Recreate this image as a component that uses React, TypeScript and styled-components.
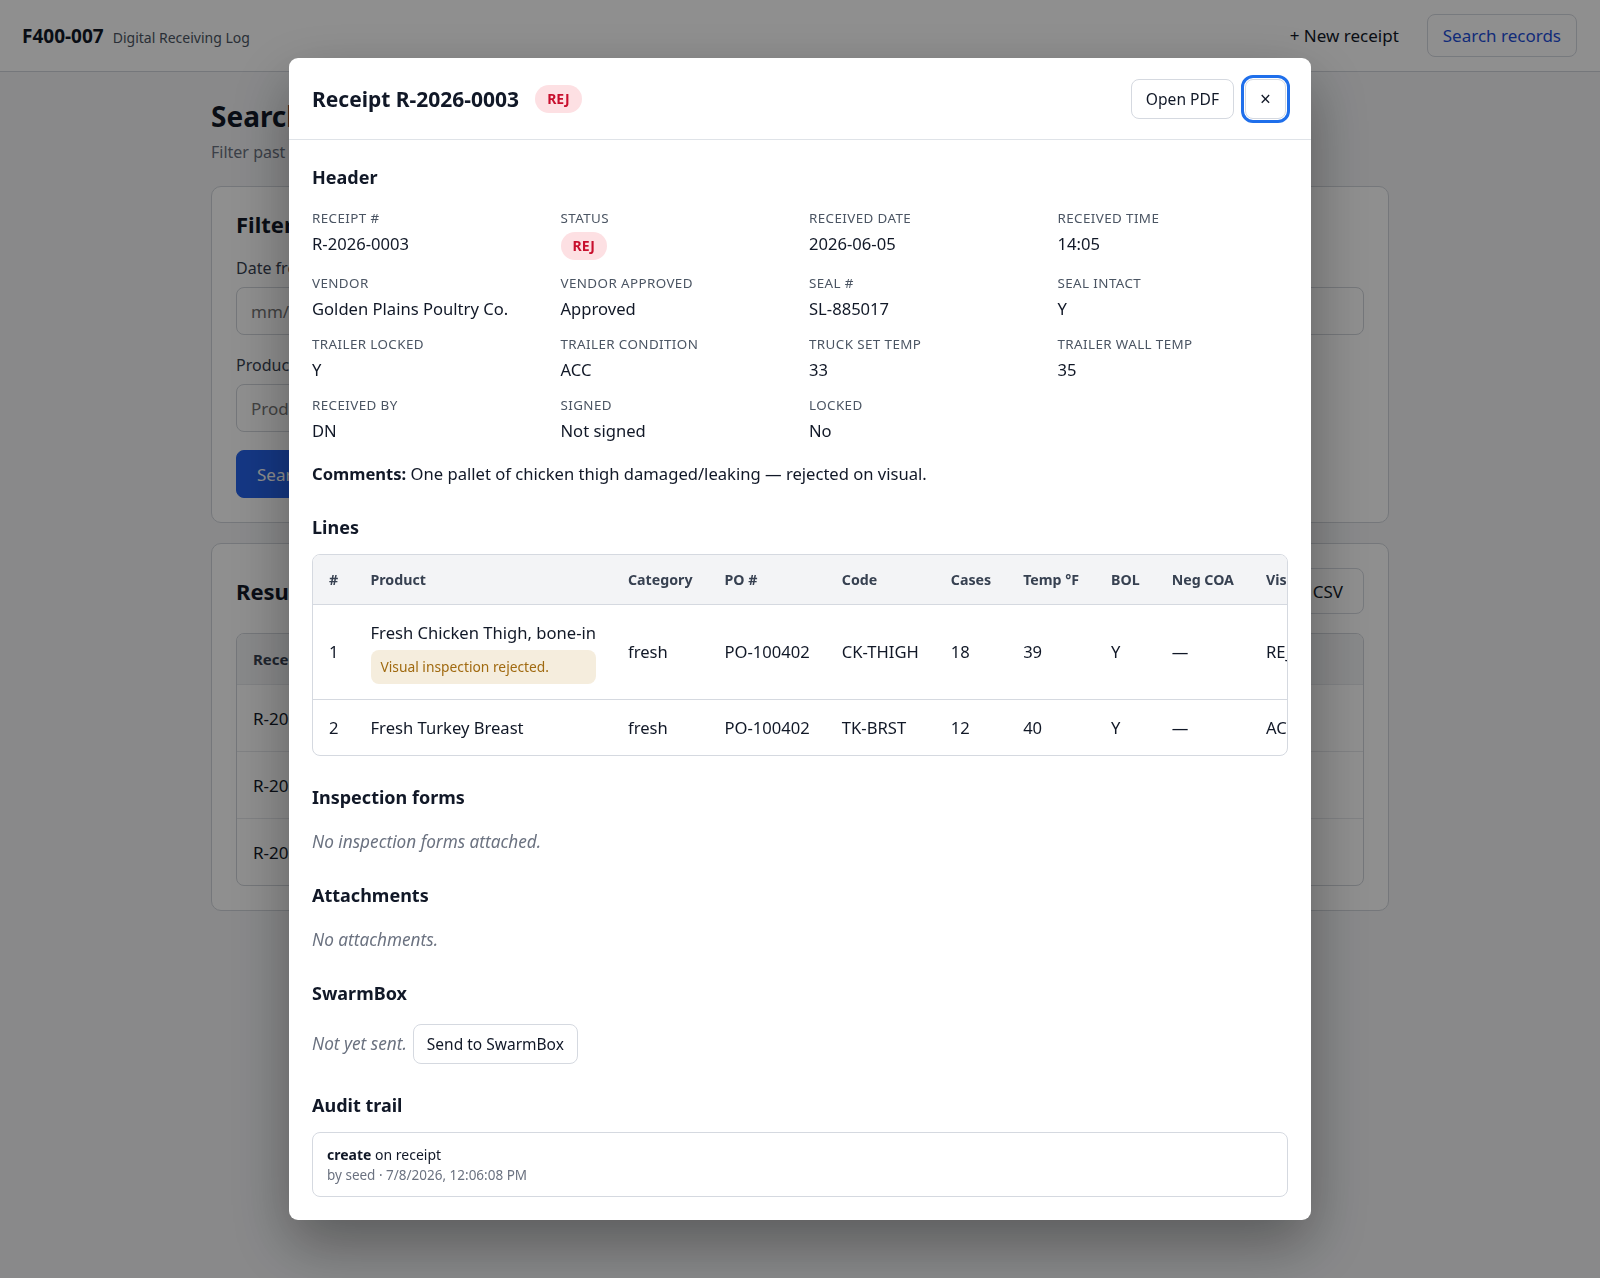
import React from "react";
import styled, { createGlobalStyle } from "styled-components";

interface Line {
  n: number;
  product: string;
  note?: string;
  category: string;
  po: string;
  code: string;
  cases: number;
  temp: number;
  bol: string;
  negCoa: string;
  visual: string;
  pallet: string;
}

interface Field {
  label: string;
  value: string;
  badge?: boolean;
}

const fields: Field[] = [
  { label: "Receipt #", value: "R-2026-0003" },
  { label: "Status", value: "REJ", badge: true },
  { label: "Received date", value: "2026-06-05" },
  { label: "Received time", value: "14:05" },
  { label: "Vendor", value: "Golden Plains Poultry Co." },
  { label: "Vendor approved", value: "Approved" },
  { label: "Seal #", value: "SL-885017" },
  { label: "Seal intact", value: "Y" },
  { label: "Trailer locked", value: "Y" },
  { label: "Trailer condition", value: "ACC" },
  { label: "Truck set temp", value: "33" },
  { label: "Trailer wall temp", value: "35" },
  { label: "Received by", value: "DN" },
  { label: "Signed", value: "Not signed" },
  { label: "Locked", value: "No" },
];

const lines: Line[] = [
  {
    n: 1,
    product: "Fresh Chicken Thigh, bone-in",
    note: "Visual inspection rejected.",
    category: "fresh",
    po: "PO-100402",
    code: "CK-THIGH",
    cases: 18,
    temp: 39,
    bol: "Y",
    negCoa: "—",
    visual: "REJ",
    pallet: "OK",
  },
  {
    n: 2,
    product: "Fresh Turkey Breast",
    category: "fresh",
    po: "PO-100402",
    code: "TK-BRST",
    cases: 12,
    temp: 40,
    bol: "Y",
    negCoa: "—",
    visual: "ACC",
    pallet: "OK",
  },
];

const results = [
  { id: "R-2026-0003", date: "2026-06-05", vendor: "Golden Plains Poultry Co.", status: "REJ", by: "DN" },
  { id: "R-2026-0002", date: "2026-06-04", vendor: "Prairie Fresh Meats", status: "ACC", by: "JM" },
  { id: "R-2026-0001", date: "2026-06-03", vendor: "Valley Dairy Co-op", status: "ACC", by: "DN" },
];

const GlobalStyle = createGlobalStyle`
  * { box-sizing: border-box; }
  html, body { margin: 0; padding: 0; }
  body {
    font-family: "Noto Sans", "Open Sans", sans-serif;
    color: #111827;
    background: #f4f5f7;
  }
`;

/* background page */

const Page = styled.div`
  min-height: 100vh;
`;

const TopBar = styled.header`
  height: 72px;
  display: flex;
  align-items: center;
  justify-content: space-between;
  padding: 0 23px 0 22px;
  background: #fff;
  border-bottom: 1px solid #d1d5db;
`;

const Brand = styled.div`
  display: flex;
  align-items: baseline;
  gap: 9px;
`;

const BrandCode = styled.span`
  font-size: 19px;
  font-weight: 700;
`;

const BrandName = styled.span`
  font-size: 14px;
  color: #4b5563;
`;

const NavActions = styled.nav`
  display: flex;
  align-items: center;
  gap: 12px;
`;

const Button = styled.button<{ $tone?: "default" | "ghost" | "primary" | "nav" }>`
  font-family: inherit;
  font-size: 15.6px;
  height: 40px;
  padding: 0 14px;
  border-radius: 8px;
  cursor: pointer;
  white-space: nowrap;
  border: 1px solid
    ${(p) => (p.$tone === "ghost" ? "transparent" : p.$tone === "primary" ? "#2563eb" : "#d5d9e0")};
  background: ${(p) => (p.$tone === "ghost" ? "transparent" : p.$tone === "primary" ? "#2563eb" : "#fff")};
  color: ${(p) => (p.$tone === "primary" ? "#fff" : p.$tone === "nav" ? "#1d4ed8" : "#111827")};
  ${(p) => (p.$tone === "nav" || p.$tone === "ghost" ? "height: 43px; font-size: 17px; padding: 0 15px;" : "")}
`;

const Main = styled.main`
  max-width: 1178px;
  margin: 0 auto;
  padding: 27px 0 40px;
`;

const PageTitle = styled.h1`
  margin: 0;
  font-size: 28px;
  line-height: 35px;
  font-weight: 700;
`;

const PageSub = styled.p`
  margin: 6px 0 22px;
  font-size: 16px;
  line-height: 24px;
  color: #6b7280;
`;

const Card = styled.section`
  background: #fff;
  border: 1px solid #d1d5db;
  border-radius: 10px;
  padding: 24px;
  & + & {
    margin-top: 20px;
  }
`;

const CardHead = styled.div`
  display: flex;
  align-items: center;
  justify-content: space-between;
  margin-bottom: 19px;
`;

const CardTitle = styled.h2`
  margin: 0;
  font-size: 22px;
  line-height: 26px;
  font-weight: 700;
`;

const FilterGrid = styled.div`
  display: grid;
  grid-template-columns: repeat(4, minmax(0, 1fr));
  gap: 19px 16px;
  margin: 20px 0 18px;
`;

const FilterField = styled.label<{ $span?: number }>`
  display: flex;
  flex-direction: column;
  gap: 8px;
  min-width: 0;
  font-size: 16px;
  line-height: 22px;
  color: #374151;
  grid-column: span ${(p) => p.$span ?? 1};
`;

const Input = styled.input`
  width: 100%;
  min-width: 0;
  height: 48px;
  padding: 0 14px;
  font-family: inherit;
  font-size: 17px;
  border: 1px solid #d1d5db;
  border-radius: 8px;
  background: #fff;
`;

const SearchButton = styled(Button)`
  height: 48px;
  padding: 0 20px;
  font-size: 17px;
`;

const ExportButton = styled(Button)`
  height: 46px;
  padding: 0 20px;
  font-size: 17px;
`;

const ResultsTable = styled.table`
  width: 100%;
  border-collapse: separate;
  border-spacing: 0;
  border: 1px solid #d1d5db;
  border-radius: 8px;
  overflow: hidden;
  th {
    text-align: left;
    background: #f3f4f6;
    font-size: 15px;
    color: #374151;
    padding: 14px 16px;
    height: 50px;
  }
  td {
    padding: 0 16px;
    height: 67px;
    border-top: 1px solid #e5e7eb;
    font-size: 17px;
  }
  td:last-child {
    text-align: right;
    padding-right: 52px;
  }
`;

/* modal */

const Overlay = styled.div`
  position: fixed;
  inset: 0;
  background: rgba(0, 0, 0, 0.44);
  display: flex;
  align-items: center;
  justify-content: center;
`;

const Modal = styled.div`
  width: 1022px;
  background: #fff;
  border-radius: 9px;
  box-shadow: 0 24px 60px rgba(0, 0, 0, 0.35);
  overflow: hidden;
`;

const ModalHeader = styled.div`
  display: flex;
  align-items: center;
  justify-content: space-between;
  padding: 21px 25px 20px 23px;
  border-bottom: 1px solid #dfe3e8;
`;

const ModalTitle = styled.h2`
  display: flex;
  align-items: center;
  gap: 16px;
  margin: 0;
  font-size: 21px;
  font-weight: 700;
`;

const HeaderActions = styled.div`
  display: flex;
  align-items: center;
  gap: 11px;
`;

const CloseButton = styled(Button)`
  width: 41px;
  padding: 0;
  font-size: 19px;
  outline: 3px solid #1f6feb;
  outline-offset: 1px;
`;

const Badge = styled.span<{ $tone: "rej" | "acc" }>`
  display: inline-flex;
  align-items: center;
  height: 28px;
  padding: 0 12px;
  border-radius: 999px;
  font-size: 14px;
  font-weight: 700;
  line-height: 1;
  vertical-align: middle;
  background: ${(p) => (p.$tone === "rej" ? "#fde0e3" : "#dcfce7")};
  color: ${(p) => (p.$tone === "rej" ? "#c8102e" : "#15803d")};
`;

const ModalBody = styled.div`
  padding: 25px 23px 23px;
`;

const Section = styled.section`
  & + & {
    margin-top: 29px;
  }
`;

const SectionTitle = styled.h3`
  margin: 0 0 14px;
  font-size: 18px;
  line-height: 25px;
  font-weight: 700;
`;

const FieldGrid = styled.dl`
  display: grid;
  grid-template-columns: repeat(4, minmax(0, 1fr));
  column-gap: 18px;
  row-gap: 14px;
  margin: 19px 0 0;
`;

const FieldItem = styled.div``;

const FieldLabel = styled.dt`
  font-size: 13.4px;
  line-height: 18px;
  letter-spacing: 0.03em;
  text-transform: uppercase;
  color: #4b5563;
  margin-bottom: 4px;
`;

const FieldValue = styled.dd`
  margin: 0;
  font-size: 16.6px;
  line-height: 25px;
  color: #111827;
`;

const Comments = styled.p`
  margin: 18px 0 0;
  font-size: 16.6px;
  line-height: 25px;
  strong {
    font-weight: 700;
  }
`;

const TableWrap = styled.div`
  border: 1px solid #d5d9e0;
  border-radius: 8px;
  overflow-x: auto;
  scrollbar-width: none;
  &::-webkit-scrollbar {
    display: none;
  }
`;

const LinesTable = styled.table`
  min-width: 100%;
  border-collapse: collapse;
  white-space: nowrap;
`;

const Th = styled.th`
  text-align: left;
  background: #f3f4f6;
  color: #374151;
  font-size: 14.2px;
  font-weight: 700;
  line-height: 22px;
  padding: 14px 16px 13px;
  border-bottom: 1px solid #d5d9e0;
`;

const Td = styled.td`
  font-size: 16.6px;
  line-height: 25px;
  padding: 15px 16px;
  vertical-align: middle;
  color: #111827;
`;

const Tr = styled.tr`
  & + & td {
    border-top: 1px solid #d5d9e0;
  }
`;

const LineNote = styled.div`
  margin-top: 5px;
  padding: 6px 10px;
  border-radius: 8px;
  background: #f5eddd;
  color: #a06a10;
  font-size: 13.8px;
  line-height: 22px;
`;

const Muted = styled.p`
  margin: 19px 0 0;
  font-size: 17.2px;
  line-height: 25px;
  font-style: italic;
  color: #6b7280;
`;

const SendRow = styled.div`
  display: flex;
  align-items: center;
  gap: 6px;
  margin-top: 18px;
  ${Muted} {
    margin: 0;
  }
`;

const SendButton = styled(Button)`
  font-size: 15.5px;
  padding: 0 13px;
`;

const AuditItem = styled.div`
  border: 1px solid #d5d9e0;
  border-radius: 8px;
  padding: 11px 14px 10px;
`;

const AuditAction = styled.div`
  font-size: 14px;
  line-height: 21px;
  strong {
    font-weight: 700;
  }
`;

const AuditMeta = styled.div`
  font-size: 13.5px;
  line-height: 21px;
  color: #6b7280;
`;

const lineColumns = ["#", "Product", "Category", "PO #", "Code", "Cases", "Temp °F", "BOL", "Neg COA", "Visual", "Pallet"];

export default function App() {
  return (
    <>
      <GlobalStyle />
      <Page>
        <TopBar>
          <Brand>
            <BrandCode>F400-007</BrandCode>
            <BrandName>Digital Receiving Log</BrandName>
          </Brand>
          <NavActions>
            <Button $tone="ghost">+ New receipt</Button>
            <Button $tone="nav">Search records</Button>
          </NavActions>
        </TopBar>
        <Main>
          <PageTitle>Search records</PageTitle>
          <PageSub>Filter past receipts by date, vendor, product or status.</PageSub>
          <Card>
            <CardTitle>Filters</CardTitle>
            <FilterGrid>
              <FilterField>
                Date from
                <Input placeholder="mm/dd/yyyy" />
              </FilterField>
              <FilterField>
                Date to
                <Input placeholder="mm/dd/yyyy" />
              </FilterField>
              <FilterField>
                Vendor
                <Input placeholder="Any vendor" />
              </FilterField>
              <FilterField>
                Status
                <Input placeholder="Any" />
              </FilterField>
              <FilterField $span={2}>
                Product
                <Input placeholder="Product name or code" />
              </FilterField>
            </FilterGrid>
            <SearchButton $tone="primary">Search</SearchButton>
          </Card>
          <Card>
            <CardHead>
              <CardTitle>Results</CardTitle>
              <ExportButton>Export CSV</ExportButton>
            </CardHead>
            <ResultsTable>
              <thead>
                <tr>
                  <th>Receipt #</th>
                  <th>Date</th>
                  <th>Vendor</th>
                  <th>Status</th>
                  <th>Received by</th>
                  <th />
                </tr>
              </thead>
              <tbody>
                {results.map((r) => (
                  <tr key={r.id}>
                    <td>{r.id}</td>
                    <td>{r.date}</td>
                    <td>{r.vendor}</td>
                    <td>
                      <Badge $tone={r.status === "REJ" ? "rej" : "acc"}>{r.status}</Badge>
                    </td>
                    <td>{r.by}</td>
                    <td>
                      <Button>View</Button>
                    </td>
                  </tr>
                ))}
              </tbody>
            </ResultsTable>
          </Card>
        </Main>
      </Page>

      <Overlay>
        <Modal role="dialog" aria-modal="true">
          <ModalHeader>
            <ModalTitle>
              Receipt R-2026-0003
              <Badge $tone="rej">REJ</Badge>
            </ModalTitle>
            <HeaderActions>
              <Button>Open PDF</Button>
              <CloseButton aria-label="Close">×</CloseButton>
            </HeaderActions>
          </ModalHeader>
          <ModalBody>
            <Section>
              <SectionTitle>Header</SectionTitle>
              <FieldGrid>
                {fields.map((f) => (
                  <FieldItem key={f.label}>
                    <FieldLabel>{f.label}</FieldLabel>
                    <FieldValue>{f.badge ? <Badge $tone="rej">{f.value}</Badge> : f.value}</FieldValue>
                  </FieldItem>
                ))}
              </FieldGrid>
              <Comments>
                <strong>Comments:</strong> One pallet of chicken thigh damaged/leaking — rejected on visual.
              </Comments>
            </Section>

            <Section>
              <SectionTitle>Lines</SectionTitle>
              <TableWrap>
                <LinesTable>
                  <thead>
                    <tr>
                      {lineColumns.map((c) => (
                        <Th key={c}>{c}</Th>
                      ))}
                    </tr>
                  </thead>
                  <tbody>
                    {lines.map((l) => (
                      <Tr key={l.n}>
                        <Td>{l.n}</Td>
                        <Td>
                          {l.product}
                          {l.note && <LineNote>{l.note}</LineNote>}
                        </Td>
                        <Td>{l.category}</Td>
                        <Td>{l.po}</Td>
                        <Td>{l.code}</Td>
                        <Td>{l.cases}</Td>
                        <Td>{l.temp}</Td>
                        <Td>{l.bol}</Td>
                        <Td>{l.negCoa}</Td>
                        <Td>{l.visual}</Td>
                        <Td>{l.pallet}</Td>
                      </Tr>
                    ))}
                  </tbody>
                </LinesTable>
              </TableWrap>
            </Section>

            <Section>
              <SectionTitle>Inspection forms</SectionTitle>
              <Muted>No inspection forms attached.</Muted>
            </Section>

            <Section>
              <SectionTitle>Attachments</SectionTitle>
              <Muted>No attachments.</Muted>
            </Section>

            <Section>
              <SectionTitle>SwarmBox</SectionTitle>
              <SendRow>
                <Muted>Not yet sent.</Muted>
                <SendButton>Send to SwarmBox</SendButton>
              </SendRow>
            </Section>

            <Section>
              <SectionTitle>Audit trail</SectionTitle>
              <AuditItem>
                <AuditAction>
                  <strong>create</strong> on receipt
                </AuditAction>
                <AuditMeta>by seed · 7/8/2026, 12:06:08 PM</AuditMeta>
              </AuditItem>
            </Section>
          </ModalBody>
        </Modal>
      </Overlay>
    </>
  );
}
